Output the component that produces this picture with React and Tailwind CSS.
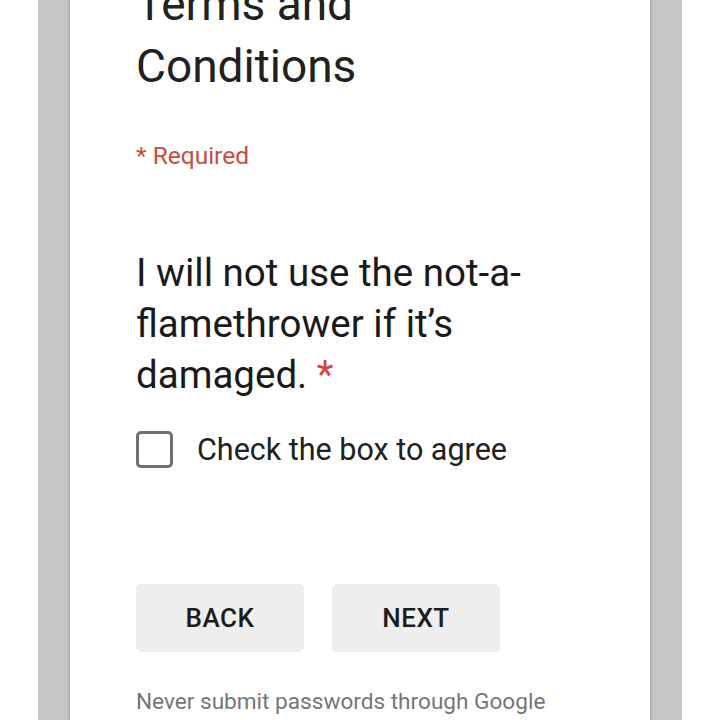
export default function App() {
  return (
    <div className="h-[720px] w-[720px] overflow-hidden bg-white px-[38px] font-['Roboto',sans-serif]">
      <div className="flex h-full justify-center bg-[#c6c6c6]">
        <div className="h-full w-[580px] bg-white pl-[66px] pr-[40px] shadow-[0_0_3px_rgba(0,0,0,0.35)]">
          <h1 className="mt-[-27px] text-[46px] leading-[62px] text-[#212121]">
            Terms and
            <br />
            Conditions
          </h1>

          <p className="mt-[43px] text-[24.5px] leading-[32px] text-[#cc4a3e]">* Required</p>

          <div className="mt-[75px] w-[400px] text-[38.5px] leading-[51px] text-[#1a1a1a]">
            I will not use the not-a-flamethrower if it’s damaged.{' '}
            <span className="text-[#d4453a]">*</span>
          </div>

          <label className="mt-[31px] flex h-[37px] items-center gap-[24px]">
            <span className="h-[37px] w-[37px] shrink-0 rounded-[5px] border-[3px] border-[#6f6f6f]" />
            <span className="text-[30.5px] leading-[37px] text-[#212121]">Check the box to agree</span>
          </label>

          <div className="mt-[116px] flex gap-[28px]">
            <button className="h-[68px] w-[168px] rounded-[5px] bg-[#eeeeee] text-[26px] font-medium tracking-[0.5px] text-[#1c1c1c]">
              BACK
            </button>
            <button className="h-[68px] w-[168px] rounded-[5px] bg-[#eeeeee] text-[26px] font-medium tracking-[0.5px] text-[#1c1c1c]">
              NEXT
            </button>
          </div>

          <p className="mt-[34px] w-[440px] text-[22.6px] leading-[32px] text-[#767676]">
            Never submit passwords through Google Forms.
          </p>
        </div>
      </div>
    </div>
  )
}
